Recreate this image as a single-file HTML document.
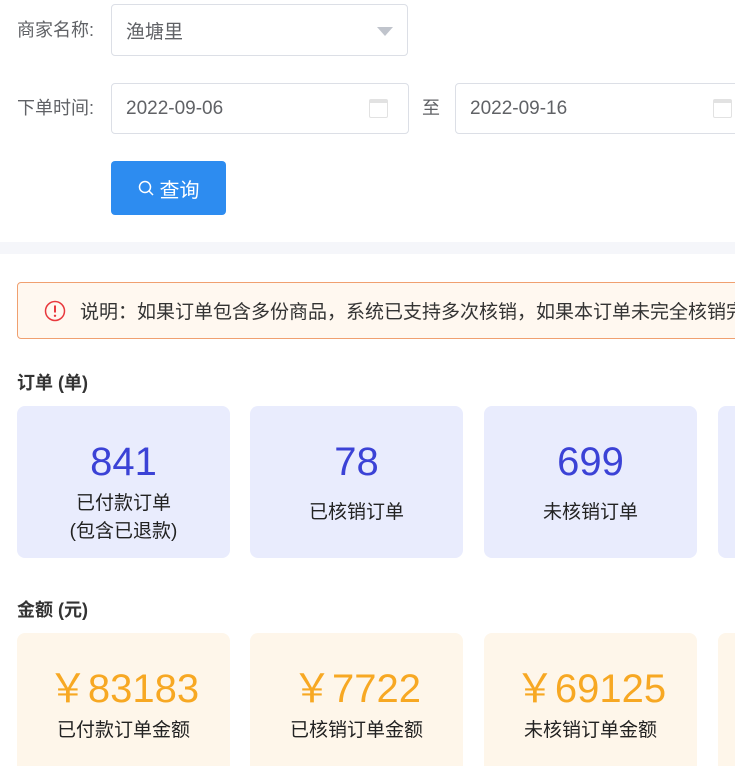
<!DOCTYPE html>
<html><head><meta charset="utf-8"><style>
*{margin:0;padding:0;box-sizing:border-box}
html,body{width:735px;height:766px;overflow:hidden}
body{background:#fff;font-family:"Liberation Sans","Noto Sans CJK SC",sans-serif;position:relative;color:#606266}
.a{position:absolute}
.lbl{font-size:18px;color:#606266;line-height:20px}
.inp{position:absolute;border:1px solid #dcdfe6;border-radius:4px;background:#fff;font-size:19px;color:#606266;padding-left:14px;display:flex;align-items:center}
.card{position:absolute;width:213px;border-radius:8px;text-align:center}
.o{background:#e9ecfd;top:406px;height:152px}
.m{background:#fef6ea;top:633px;height:160px}
.num{font-size:40px;line-height:40px}
.o .num{color:#3b42d6;margin-top:36px}
.m .num{color:#f7a823;margin-top:36px}
.t{font-size:19px;color:#222;line-height:28px}
.h{font-size:18px;font-weight:bold;color:#333}
.cal{position:absolute;width:19px;height:19px;border:1px solid #e2e2e2;border-top:4px solid #e2e2e2;border-radius:2px}
</style></head><body>
<div class="a lbl" style="left:17px;top:20px">商家名称:</div>
<div class="inp" style="left:111px;top:4px;width:297px;height:52px">渔塘里
<div class="a" style="right:14px;top:22px;width:0;height:0;border-left:8px solid transparent;border-right:8px solid transparent;border-top:9px solid #c0c4cc"></div></div>
<div class="a lbl" style="left:17px;top:98px">下单时间:</div>
<div class="inp" style="left:111px;top:83px;width:298px;height:51px">2022-09-06<div class="cal" style="left:257px;top:15px"></div></div>
<div class="a lbl" style="left:422px;top:98px">至</div>
<div class="inp" style="left:455px;top:83px;width:300px;height:51px">2022-09-16<div class="cal" style="left:257px;top:15px"></div></div>
<div class="a" style="left:111px;top:161px;width:115px;height:54px;background:#2d8cf0;border-radius:4px;color:#fff;font-size:20px;display:flex;align-items:center;justify-content:center">
<svg width="17" height="17" viewBox="0 0 17 17" style="margin-right:5px"><circle cx="7" cy="7" r="5.5" fill="none" stroke="#fff" stroke-width="1.5"/><path d="M11 11l4 4" stroke="#fff" stroke-width="1.5"/></svg>查询</div>
<div class="a" style="left:0;top:242px;width:735px;height:12px;background:#f5f6fa"></div>
<div class="a" style="left:17px;top:282px;width:760px;height:57px;border:1px solid #f0a070;border-radius:4px;background:#fff8f0;font-size:19px;color:#333;display:flex;align-items:center;padding-left:26px;white-space:nowrap">
<svg width="22" height="22" viewBox="0 0 22 22" style="margin-right:14px"><circle cx="11" cy="11" r="9.5" fill="none" stroke="#e8383d" stroke-width="1.5"/><path d="M11 5.5v7" stroke="#e8383d" stroke-width="2"/><circle cx="11" cy="15.8" r="1.2" fill="#e8383d"/></svg>说明：如果订单包含多份商品，系统已支持多次核销，如果本订单未完全核销完</div>
<div class="a h" style="left:17px;top:369px">订单 (单)</div>
<div class="card o" style="left:17px"><div class="num">841</div><div class="t" style="margin-top:8px">已付款订单<br>(包含已退款)</div></div>
<div class="card o" style="left:250px"><div class="num">78</div><div class="t" style="margin-top:17px">已核销订单</div></div>
<div class="card o" style="left:484px"><div class="num">699</div><div class="t" style="margin-top:17px">未核销订单</div></div>
<div class="card o" style="left:718px"></div>
<div class="a h" style="left:17px;top:596px">金额 (元)</div>
<div class="card m" style="left:17px"><div class="num">￥83183</div><div class="t" style="margin-top:8px">已付款订单金额</div></div>
<div class="card m" style="left:250px"><div class="num">￥7722</div><div class="t" style="margin-top:8px">已核销订单金额</div></div>
<div class="card m" style="left:484px"><div class="num">￥69125</div><div class="t" style="margin-top:8px">未核销订单金额</div></div>
<div class="card m" style="left:718px"></div>
</body></html>
